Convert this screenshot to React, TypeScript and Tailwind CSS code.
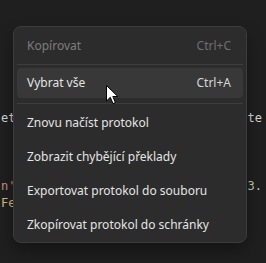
import React from 'react';

type Item = { label: string; shortcut?: string; disabled?: boolean; active?: boolean };

const MenuRow: React.FC<{ item: Item }> = ({ item }) => (
    <div
        className={`mx-[3px] my-[2px] flex h-[30px] items-center justify-between rounded-[4px] pl-[10px] pr-[12px] ${
            item.active ? 'bg-[#383838]' : ''
        }`}
    >
        <span className={item.disabled ? 'text-[#7d7d7d]' : 'text-[#e4e4e4]'}>{item.label}</span>
        {item.shortcut && (
            <span className={item.disabled ? 'text-[#6f6f6f]' : 'text-[#d6d6d6]'}>{item.shortcut}</span>
        )}
    </div>
);

const Cursor = () => (
    <svg className="absolute left-[106px] top-[85px]" width="13" height="20" viewBox="0 0 13 20">
        <path
            d="M0.5 0.5 L0.5 16 L4.3 12.3 L7 18.6 L9.4 17.6 L6.8 11.5 L11.8 11.5 Z"
            fill="#ffffff"
            stroke="#000000"
            strokeWidth="1"
            strokeLinejoin="miter"
        />
    </svg>
);

const codeLines: { left: React.ReactNode; right: React.ReactNode }[] = [
    { left: <span className="text-[#d4d4d4]">et</span>, right: <span className="text-[#d4d4d4]">ate</span> },
    { left: null, right: null },
    { left: null, right: null },
    { left: null, right: null },
    { left: <span className="text-[#ce9178]">n'</span>, right: <span className="text-[#b5cea8]">0.3.</span> },
    { left: <span className="text-[#d7ba7d]">Fe</span>, right: null },
];

export default function App() {
    return (
        <div className="relative h-[263px] w-[266px] overflow-hidden bg-[#1f1f1f] font-['Noto_Sans',sans-serif] text-[12px]">
            <div className="flex flex-col pt-[110px] font-['DejaVu_Sans_Mono',monospace] text-[12px] leading-[17px]">
                {codeLines.map((line, i) => (
                    <div key={i} className="flex h-[17px] justify-between pl-[1px] pr-[4px]">
                        <span>{line.left}</span>
                        <span>{line.right}</span>
                    </div>
                ))}
            </div>

            <div className="absolute left-[13px] top-[26px] flex w-[234px] flex-col rounded-[8px] border border-[#3c3c3c] bg-[#2c2c2c] pt-[2px] shadow-[0_8px_16px_rgba(0,0,0,0.35)]">
                <MenuRow item={{ label: 'Kopírovat', shortcut: 'Ctrl+C', disabled: true }} />
                <div className="mx-[3px] mb-[1px] mt-px h-px bg-[#3d3d3d]" />
                <MenuRow item={{ label: 'Vybrat vše', shortcut: 'Ctrl+A', active: true }} />
                <div className="mx-[3px] mb-[2px] mt-[3px] h-px bg-[#3d3d3d]" />
                <MenuRow item={{ label: 'Znovu načíst protokol' }} />
                <MenuRow item={{ label: 'Zobrazit chybějící překlady' }} />
                <MenuRow item={{ label: 'Exportovat protokol do souboru' }} />
                <MenuRow item={{ label: 'Zkopírovat protokol do schránky' }} />
            </div>

            <Cursor />
        </div>
    );
}
